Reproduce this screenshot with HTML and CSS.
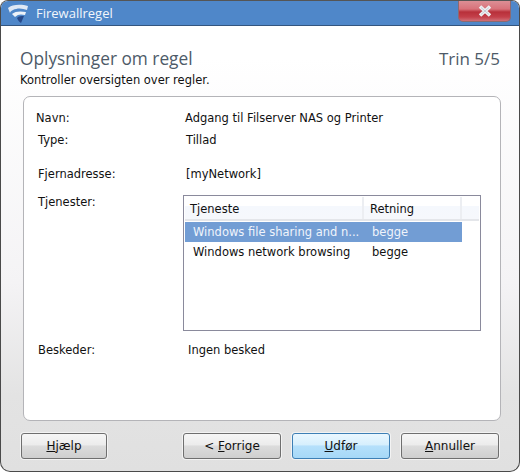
FILE: index.html
```html
<!DOCTYPE html>
<html lang="da">
<head>
<meta charset="utf-8">
<title>Firewallregel</title>
<link rel="stylesheet" href="styles.css">
</head>
<body>
<div class="window">
  <header class="titlebar">
    <svg class="logo" width="22" height="22" viewBox="0 0 22 22"><path d="M1 5C5 1 15 1 21 3L20 7C15 5 10 5 6 7 4 8 3 9 3 10Z" fill="#dfe8f4"/><path d="M5 11C8 8 14 8 19 9L18 12C14 11 11 11 8 14 7 13 6 12 5 11Z" fill="#eef3f9"/><path d="M10 15C12 13 14 13 17 13L14 20C12 19 11 17 10 15Z" fill="#27498a"/></svg>
    <span class="title">Firewallregel</span>
    <button class="close" aria-label="Luk"><svg width="16" height="12" viewBox="0 0 16 12"><path d="M3 1.5L13 10.5M13 1.5L3 10.5" stroke="#eef0f2" stroke-width="3.6"/><path d="M4 2.5L12 9.5M12 2.5L4 9.5" stroke="#c4ccd6" stroke-width="1"/></svg></button>
  </header>
  <main class="content">
    <div class="heading">
      <h1>Oplysninger om regel</h1>
      <span class="step">Trin 5/5</span>
    </div>
    <p class="sub">Kontroller oversigten over regler.</p>
    <section class="panel">
      <div class="row row-name"><span class="label">Navn:</span><span class="value">Adgang til Filserver NAS og Printer</span></div>
      <div class="row row-type"><span class="label">Type:</span><span class="value">Tillad</span></div>
      <div class="row row-addr"><span class="label">Fjernadresse:</span><span class="value">[myNetwork]</span></div>
      <div class="row row-svc">
        <span class="label">Tjenester:</span>
        <div class="list">
          <div class="list-head"><span class="col1">Tjeneste</span><span class="col2">Retning</span><span class="col3"></span></div>
          <div class="item selected"><span class="c1">Windows file sharing and n...</span><span class="c2">begge</span></div>
          <div class="item"><span class="c1">Windows network browsing</span><span class="c2">begge</span></div>
        </div>
      </div>
      <div class="row row-msg"><span class="label">Beskeder:</span><span class="value">Ingen besked</span></div>
    </section>
    <footer class="buttons">
      <button class="btn help"><u>H</u>jælp</button>
      <button class="btn wide back">&lt; <u>F</u>orrige</button>
      <button class="btn wide primary"><u>U</u>dfør</button>
      <button class="btn wide"><u>A</u>nnuller</button>
    </footer>
  </main>
</div>
</body>
</html>
```
FILE: styles.css
```css
* { box-sizing: border-box; }
html, body { margin: 0; padding: 0; width: 520px; height: 473px; background: #fff; overflow: hidden; }
body { font-family: "DejaVu Sans", sans-serif; font-size: 12px; color: #111; }
.window {
  width: 520px; height: 472px;
  border: 1px solid #4a4a4a; border-top-color: #555;
  border-radius: 8px 8px 10px 10px;
  background: linear-gradient(#fff 0, #fff 12%, #f4f3f5 60%, #e3e3e3 84%, #e0e0e0 100%);
  display: flex; flex-direction: column; overflow: hidden;
}
.titlebar {
  height: 25px; flex: none; background: #4f87c9; border-bottom: 1px solid #33557f;
  display: flex; align-items: center; padding: 0 8px 0 6px; color: #f2f6fb;
}
.logo { margin-right: 7px; margin-top: 1px; }
.title { font-family: "Open Sans", sans-serif; font-size: 13px; flex: 1; }
.close {
  width: 53px; height: 21px; margin-top: -4px; padding: 0; display: flex; align-items: center; justify-content: center;
  border: 1px solid #8d6a70; border-top: 0; border-radius: 0 0 5px 5px;
  background: linear-gradient(#dc8f95 0, #d8727a 40%, #b8303a 55%, #c4404a 80%, #d07078 100%);
}
.content { flex: 1; display: flex; flex-direction: column; padding: 0 18px 0 19px; min-height: 0; }
.heading { display: flex; justify-content: space-between; align-items: baseline; margin-top: 22px; padding-right: 1px; }
h1, .step { font-family: "Open Sans", sans-serif; font-weight: 400; font-size: 17.3px; line-height: 22px; color: #4d5a68; margin: 0; }
.step { font-size: 17px; }
.sub { margin: 3px 0 0; font-size: 11.5px; line-height: 14px; }
.panel {
  margin: 9px 0 0 3px; height: 325px; flex: none; background: #fff;
  border: 1px solid #b4b4b8; border-radius: 7px;
  display: flex; flex-direction: column;
}
.row { display: flex; font-size: 11.5px; line-height: 14px; padding-left: 14px; }
.label { width: 145px; flex: none; }
.row-name { margin-top: 14px; padding-left: 12px; }
.row-name .label { width: 149px; }
.row-type { margin-top: 8px; }
.row-type .label, .row-addr .label, .row-msg .label { width: 148px; }
.row-addr { margin-top: 20px; }
.row-svc { margin-top: 14px; }
.row-msg { margin-top: 12px; }
.row-msg .value { margin-left: 2px; }
.list { width: 298px; height: 136px; border: 1px solid #8a8a9c; background: #fff; padding: 1px; }
.list-head { display: flex; height: 24px; line-height: 25px; background: linear-gradient(#fff 40%, #f5f8fd 42%, #f6f8fc); border-bottom: 2px solid #e4e6ea; }
.col1 { width: 179px; padding-left: 5px; border-right: 2px solid #eceef2; }
.col2 { width: 98px; padding-left: 6px; border-right: 2px solid #eceef2; }
.col3 { flex: 1; }
.item { display: flex; width: 277px; height: 20px; line-height: 20px; padding-left: 8px; }
.selected { background: #729dd4; color: #f0f4fb; margin-top: 1px; }
.c1 { width: 179px; white-space: nowrap; }
.buttons { display: flex; margin-top: 12px; padding-left: 1px; gap: 11px; }
.btn {
  height: 26px; width: 86px; padding: 0; font: inherit; font-size: 12px; color: #111;
  border: 1px solid #6f6f6f; border-radius: 3px; box-shadow: 0 0 0 1px #f3f3f3;
  background: linear-gradient(#f6f6f6 0, #ececec 45%, #dcdcdc 50%, #cfcfcf 100%);
}
.wide { width: 98px; }
.back { margin-left: 65px; }
.btn.primary { border-color: #3d7fb5; background: linear-gradient(#eaf7ff 0, #d6effd 45%, #b5e0fb 50%, #a6d8f7 100%); }
```
